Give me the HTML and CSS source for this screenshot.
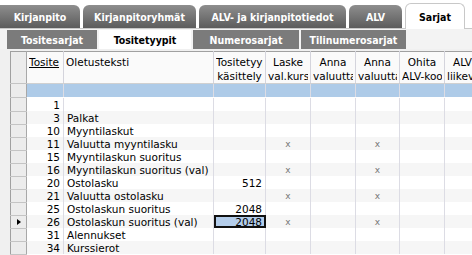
FILE: index.html
```html
<!DOCTYPE html>
<html lang="fi">
<head>
    <meta charset="UTF-8">
    <title>Sarjat</title>
    <link rel="stylesheet" href="styles.css">
</head>
<body>
    <div class="main-tabs">
        <div class="main-tab t1">Kirjanpito</div>
        <div class="main-tab t2">Kirjanpitoryhmät</div>
        <div class="main-tab t3">ALV- ja kirjanpitotiedot</div>
        <div class="main-tab t4">ALV</div>
        <div class="main-tab t5 active">Sarjat</div>
    </div>
    <div class="sub-tabs">
        <div class="sub-tab s1">Tositesarjat</div>
        <div class="sub-tab s2 active">Tositetyypit</div>
        <div class="sub-tab s3">Numerosarjat</div>
        <div class="sub-tab s4">Tilinumerosarjat</div>
    </div>
    <div class="grid-frame">
        <table class="grid">
            <colgroup>
                <col class="c-sel">
                <col class="c-tos">
                <col class="c-txt">
                <col class="c-kas">
                <col class="c-las">
                <col class="c-an1">
                <col class="c-an2">
                <col class="c-ohi">
                <col class="c-alv">
            </colgroup>
            <thead>
                <tr>
                    <th class="sel"></th>
                    <th class="left"><div><u>Tosite</u></div></th>
                    <th class="left"><div>Oletusteksti</div></th>
                    <th><div>Tositetyyppi<br>käsittely</div></th>
                    <th><div>Laske<br>val.kurssi</div></th>
                    <th><div>Anna<br>valuutta</div></th>
                    <th><div>Anna<br>valuutta</div></th>
                    <th><div>Ohita<br>ALV-koodi</div></th>
                    <th><div>ALV<br>liikevaihto</div></th>
                </tr>
            </thead>
            <tbody>
                <tr class="new"><td class="sel"></td><td></td><td></td><td></td><td></td><td></td><td></td><td></td><td></td></tr>
                <tr><td class="sel"></td><td class="num">1</td><td></td><td></td><td></td><td></td><td></td><td></td><td></td></tr>
                <tr><td class="sel"></td><td class="num">3</td><td>Palkat</td><td></td><td></td><td></td><td></td><td></td><td></td></tr>
                <tr><td class="sel"></td><td class="num">10</td><td>Myyntilaskut</td><td></td><td></td><td></td><td></td><td></td><td></td></tr>
                <tr><td class="sel"></td><td class="num">11</td><td>Valuutta myyntilasku</td><td></td><td class="mark">x</td><td></td><td class="mark">x</td><td></td><td></td></tr>
                <tr><td class="sel"></td><td class="num">15</td><td>Myyntilaskun suoritus</td><td></td><td></td><td></td><td></td><td></td><td></td></tr>
                <tr><td class="sel"></td><td class="num">16</td><td>Myyntilaskun suoritus (val)</td><td></td><td class="mark">x</td><td></td><td class="mark">x</td><td></td><td></td></tr>
                <tr><td class="sel"></td><td class="num">20</td><td>Ostolasku</td><td class="num">512</td><td></td><td></td><td></td><td></td><td></td></tr>
                <tr><td class="sel"></td><td class="num">21</td><td>Valuutta ostolasku</td><td></td><td class="mark">x</td><td></td><td class="mark">x</td><td></td><td></td></tr>
                <tr><td class="sel"></td><td class="num">25</td><td>Ostolaskun suoritus</td><td class="num">2048</td><td></td><td></td><td></td><td></td><td></td></tr>
                <tr><td class="sel current"></td><td class="num">26</td><td>Ostolaskun suoritus (val)</td><td class="num focus">2048</td><td class="mark">x</td><td></td><td class="mark">x</td><td></td><td></td></tr>
                <tr><td class="sel"></td><td class="num">31</td><td>Alennukset</td><td></td><td></td><td></td><td></td><td></td><td></td></tr>
                <tr><td class="sel"></td><td class="num">34</td><td>Kurssierot</td><td></td><td></td><td></td><td></td><td></td><td></td></tr>
            </tbody>
        </table>
    </div>
</body>
</html>
```

FILE: styles.css
```css
* {
    margin: 0;
    padding: 0;
    box-sizing: border-box;
}
body {
    width: 472px;
    height: 255px;
    overflow: hidden;
    background: #fff;
    font-family: "DejaVu Sans", Verdana, sans-serif;
    font-size: 10.5px;
    color: #000;
}

/* top tabs */
.main-tabs {
    height: 29px;
    display: flex;
    align-items: flex-end;
    gap: 3px;
    border-bottom: 1px solid #c8c8c8;
}
.main-tab {
    height: 23px;
    display: flex;
    align-items: center;
    justify-content: center;
    white-space: nowrap;
    border-radius: 6px 6px 0 0;
    background: linear-gradient(#8e8e8e, #5c5c5c);
    color: #fff;
    font-family: "DejaVu Sans Condensed", "DejaVu Sans", sans-serif;
    font-weight: bold;
    font-size: 10.5px;
}
.main-tab.t1 { width: 80px; border-top-left-radius: 0; }
.main-tab.t2 { width: 113px; }
.main-tab.t3 { width: 147px; }
.main-tab.t4 { width: 53px; }
.main-tab.t5 { width: 60px; }
.main-tab.active {
    height: 26px;
    margin-bottom: -1px;
    background: #fff;
    color: #000;
    border: 1px solid #c8c8c8;
    border-bottom: none;
}

/* second row */
.sub-tabs {
    height: 20px;
    padding: 1px 0 0 7px;
    display: flex;
    gap: 2px;
    background: #f3f3f3;
}
.sub-tab {
    height: 19px;
    display: flex;
    align-items: center;
    justify-content: center;
    white-space: nowrap;
    background: #7b7b7b;
    color: #fff;
    font-family: "DejaVu Sans Condensed", "DejaVu Sans", sans-serif;
    font-weight: bold;
    font-size: 10.5px;
}
.sub-tab.s1 { width: 90px; }
.sub-tab.s2 { width: 92px; }
.sub-tab.s3 { width: 106px; }
.sub-tab.s4 { width: 105px; }
.sub-tab.active {
    background: #fff;
    color: #000;
}

/* grid */
.grid-frame {
    height: 206px;
    padding: 2px 0 0 10px;
    background: #f0f0f0;
    overflow: hidden;
}
.grid {
    width: 470px;
    table-layout: fixed;
    border-collapse: collapse;
    background: #fff;
    border-top: 1px solid #a0a0a0;
    border-left: 1px solid #a0a0a0;
}
.c-sel { width: 16px; }
.c-tos { width: 37px; }
.c-txt { width: 150px; }
.c-kas { width: 52px; }
.c-las { width: 45px; }
.c-an1 { width: 45px; }
.c-an2 { width: 44px; }
.c-ohi { width: 45px; }
.c-alv { width: 36px; }

.grid th {
    height: 31px;
    padding: 0 2px;
    font-weight: normal;
    vertical-align: top;
    text-align: center;
    line-height: 14px;
    border-right: 1px solid #d4d4dc;
    border-bottom: 1px solid #d0d0d0;
    background: #fafafa;
}
.grid th div {
    padding-top: 3px;
    white-space: nowrap;
    overflow: hidden;
}
.grid th.left {
    text-align: left;
}
.grid tbody tr {
    height: 13px;
}
.grid td {
    padding: 1px 3px 0;
    line-height: 12px;
    white-space: nowrap;
    overflow: hidden;
    border-right: 1px solid #dcdce4;
}
.grid tbody tr:nth-child(odd) td {
    background: #f6f6f6;
}
.grid tbody tr:nth-child(even) td {
    background: #fff;
}
.grid tbody tr.new {
    height: 14px;
}
.grid tbody tr.new td {
    background: #aecbe8;
    border-bottom: 1px solid #fff;
}
.grid .sel,
.grid tbody tr td.sel {
    padding: 0;
    background: #ececec;
    border-right: 1px solid #a8a8a8;
    border-bottom: 1px solid #c4c4c4;
    position: relative;
}
.grid td.num {
    text-align: right;
}
.grid td.mark {
    text-align: center;
    color: #777;
    font-size: 9px;
}
.grid tbody tr td.focus {
    background: #b4cdea;
    outline: 2px solid #111;
    outline-offset: -2px;
}
.grid td.current::after {
    position: absolute;
    content: '';
    left: 6px;
    top: 3px;
    border-style: solid;
    border-width: 3px 0 3px 4px;
    border-color: transparent transparent transparent #000;
}
```
